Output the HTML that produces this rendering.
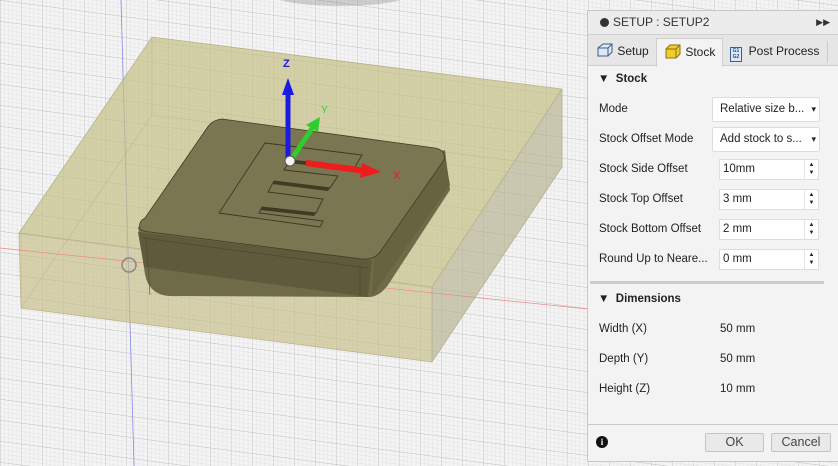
<!DOCTYPE html>
<html><head><meta charset="utf-8"><style>
*{margin:0;padding:0;box-sizing:border-box}
body{width:838px;height:466px;overflow:hidden;background:#f5f5f5;font-family:"Liberation Sans",sans-serif;position:relative}
svg.vp{position:absolute;left:0;top:0}
.panel{position:absolute;left:587px;top:10px;width:251px;height:452px;background:#f3f3f3;border:1px solid #c8c8c8;border-right:none;font-size:11.5px;color:#222}
.title{height:24px;background:#ececec;border-bottom:1px solid #d0d0d0;line-height:23px;padding-left:12px;color:#333;font-size:12px}
.title .dot{display:inline-block;width:9px;height:9px;border-radius:50%;background:#333;vertical-align:-1px;margin-right:4px}
.tabs{height:31px;background:#e6e6e6;border-bottom:1px solid #cfcfcf;position:relative}
.tab{position:absolute;top:3px;height:28px;line-height:26px;font-size:12px;color:#222}
.tab.act{background:#f3f3f3;border:1px solid #cfcfcf;border-bottom:none;height:29px}
.lab{position:absolute;left:11px}
.hdr{position:absolute;left:10px;font-weight:bold;font-size:11.5px}
.dd{position:absolute;left:124px;width:108px;height:25px;background:#fff;border:1px solid #ddd;border-radius:2px;line-height:23px;padding-left:7px;font-size:11.5px}
.dd:after{content:"▾";position:absolute;right:3px;top:0;font-size:9px}
.sp{position:absolute;left:131px;width:100px;height:21px;background:#fff;border:1px solid #ddd;line-height:19px;padding-left:3px}
.sp i{position:absolute;right:0;top:0;width:14px;height:19px;border-left:1px solid #e4e4e4;font-style:normal;font-size:6px;line-height:8px;text-align:center;padding-top:1px}
.val{position:absolute;left:132px}
.btn{position:absolute;top:422px;height:19px;border:1px solid #c4c4c4;background:#e9e9e9;text-align:center;line-height:17px;font-size:12.5px;color:#444;border-radius:2px}
</style></head><body>
<svg class="vp" width="838" height="466" viewBox="0 0 838 466">
<defs>
<pattern id="g1" width="4.2" height="4.2" patternUnits="userSpaceOnUse" patternTransform="skewY(7.5)">
<path d="M0 0H4.2M0 0V4.2" stroke="#dcdcdc" stroke-width="0.7" fill="none"/></pattern>
<pattern id="g2" width="21" height="21" patternUnits="userSpaceOnUse" patternTransform="skewY(7.5)">
<path d="M0 0H21M0 0V21" stroke="#c2c2c2" stroke-width="0.9" fill="none"/></pattern>
</defs>
<rect width="838" height="466" fill="#f4f4f4"/>
<rect width="838" height="466" fill="url(#g1)"/>
<rect width="838" height="466" fill="url(#g2)"/>
<ellipse cx="340" cy="-6" rx="70" ry="12" fill="#888" opacity="0.35"/>
<line x1="121" y1="0" x2="134" y2="466" stroke="#8888ee" stroke-width="0.8"/>
<polygon points="19,233 152,37 562,89 562,167 432,362 21,308" fill="#c9c38a" opacity="0.55"/>
<polygon points="19,233 152,37 562,89 432,287" fill="#c4be80" opacity="0.35"/>
<polygon points="432,287 562,89 562,167 432,362" fill="#999" opacity="0.25"/>
<polygon points="19,233 432,287 432,362 21,308" fill="#bdb67a" opacity="0.2"/>
<g stroke="#b0aa80" stroke-width="0.8" fill="none" opacity="0.8">
<polyline points="19,233 152,37 562,89 562,167 432,362 21,308 19,233 432,287 562,89"/>
<line x1="432" y1="287" x2="432" y2="362"/>
<polyline points="152,37 152,115 21,308" opacity="0.5"/>
<line x1="152" y1="115" x2="562" y2="167" opacity="0.5"/>
</g>
<line x1="0" y1="248" x2="838" y2="335" stroke="#e88" stroke-width="0.7"/>
<path d="M138,227 L144,267 Q146,295 170,296 L370,297 Q380,296 388,285 L450,190 L445,150 Z" fill="#6f6a47"/>
<path d="M138,232 L144,267 L368,297 L372,260 Z" fill="#5e5a3c"/>
<path d="M374,258 L445,158 L450,185 L372,296 Z" fill="#67623f"/>
<path d="M140,228 Q138,222 145,218 L207,128 Q212,120 222,119 L435,148 Q446,150 444,160 L380,252 Q374,260 362,259 L150,232 Q140,231 140,228 Z" fill="#7b7652" stroke="#3e3b25" stroke-width="0.8"/>
<path d="M143,238 L368,268" stroke="#4e4a30" stroke-width="0.8"/>
<path d="M146,236 L150,295" stroke="#4e4a30" stroke-width="0.6"/>
<path d="M360,266 L360,297" stroke="#4e4a30" stroke-width="0.6"/>
<g fill="none" stroke="#3b3822" stroke-width="0.9">
<polygon points="265,143 362,155 355,167 290,160 284,170 338,176 330,188 274,181 268,192 323,199 316,213 262,207 259,213 323,221 320,227 219,213"/>
</g>
<polygon points="290,160 355,167 353,170 288,163" fill="#3f3c25"/>
<polygon points="274,181 330,188 328,191 272,184" fill="#3f3c25"/>
<polygon points="262,207 316,213 314,216 260,210" fill="#3f3c25"/>
<line x1="288" y1="158" x2="288" y2="92" stroke="#1a1ae0" stroke-width="5"/>
<polygon points="282,95 294,95 288,78" fill="#1a1ae0"/>
<text x="283" y="67" font-size="11" fill="#1a1ae0" font-family="Liberation Sans" font-weight="bold">Z</text>
<line x1="291" y1="160" x2="313" y2="127" stroke="#2ecc2e" stroke-width="5"/>
<polygon points="306,125 318,132 320,117" fill="#2ecc2e"/>
<text x="321" y="113" font-size="10" fill="#2ecc2e" font-family="Liberation Sans">Y</text>
<line x1="306" y1="163" x2="366" y2="171" stroke="#ee1c1c" stroke-width="6"/>
<polygon points="362,163 381,172 360,178" fill="#ee1c1c"/>
<text x="393" y="179" font-size="11" fill="#ee1c1c" font-family="Liberation Sans">X</text>
<circle cx="290" cy="161" r="5" fill="#f4f4f4" stroke="#555" stroke-width="1"/>
<circle cx="129" cy="265" r="7" fill="none" stroke="#888" stroke-width="1.5"/>
</svg>
<div class="panel">
<div class="title"><span class="dot"></span>SETUP : SETUP2<span style="position:absolute;right:8px;font-size:9px">▶▶</span></div>
<div class="tabs">
<div class="tab" style="left:8px"><svg width="18" height="16" style="vertical-align:-3px" viewBox="0 0 18 16"><path d="M2 6 L7 2 H16 V10 L12 14 H2 Z" fill="#dfe8f3" stroke="#3a5f8a"/><path d="M2 6 H12 V14 M12 6 L16 2" fill="none" stroke="#3a5f8a"/></svg> Setup</div>
<div class="tab act" style="left:68px;width:67px;padding-left:7px"><svg width="18" height="16" style="vertical-align:-3px" viewBox="0 0 18 16"><path d="M2 6 L6 2 H16 V11 L12 15 H2 Z" fill="#f0cd2a" stroke="#8a7210"/><path d="M2 6 H12 V15 M12 6 L16 2" fill="none" stroke="#8a7210"/></svg> Stock</div>
<div class="tab" style="left:142px"><span style="display:inline-block;width:12px;height:15px;border:1px solid #3a5f8a;background:#dfe8f3;font-size:5px;line-height:6px;color:#1a4ea0;vertical-align:-3px;text-align:center;font-weight:bold">G1<br>G2</span> &nbsp;Post Process</div>
<div style="position:absolute;left:239px;top:6px;width:1px;height:22px;background:#ccc"></div>
</div>
<div class="hdr" style="top:62px">▼ &nbsp;Stock</div>
<div class="lab" style="top:92px">Mode</div>
<div class="dd" style="top:86px">Relative size b...</div>
<div class="lab" style="top:122px">Stock Offset Mode</div>
<div class="dd" style="top:116px">Add stock to s...</div>
<div class="lab" style="top:152px">Stock Side Offset</div>
<div class="sp" style="top:148px">10mm<i>▲<br>▼</i></div>
<div class="lab" style="top:182px">Stock Top Offset</div>
<div class="sp" style="top:178px">3 mm<i>▲<br>▼</i></div>
<div class="lab" style="top:212px">Stock Bottom Offset</div>
<div class="sp" style="top:208px">2 mm<i>▲<br>▼</i></div>
<div class="lab" style="top:242px">Round Up to Neare...</div>
<div class="sp" style="top:238px">0 mm<i>▲<br>▼</i></div>
<div style="position:absolute;left:2px;top:270px;width:234px;height:3px;background:#ccc"></div>
<div class="hdr" style="top:282px">▼ &nbsp;Dimensions</div>
<div class="lab" style="top:312px">Width (X)</div><div class="val" style="top:312px">50 mm</div>
<div class="lab" style="top:342px">Depth (Y)</div><div class="val" style="top:342px">50 mm</div>
<div class="lab" style="top:372px">Height (Z)</div><div class="val" style="top:372px">10 mm</div>
<div style="position:absolute;left:0;top:413px;width:251px;height:1px;background:#c8c8c8"></div>
<div style="position:absolute;left:8px;top:425px;width:12px;height:12px;border-radius:50%;background:#111;color:#fff;font-size:9px;font-weight:bold;text-align:center;line-height:12px;font-family:'Liberation Serif',serif">i</div>
<div class="btn" style="left:117px;width:59px">OK</div>
<div class="btn" style="left:183px;width:60px">Cancel</div>
</div>
</body></html>
